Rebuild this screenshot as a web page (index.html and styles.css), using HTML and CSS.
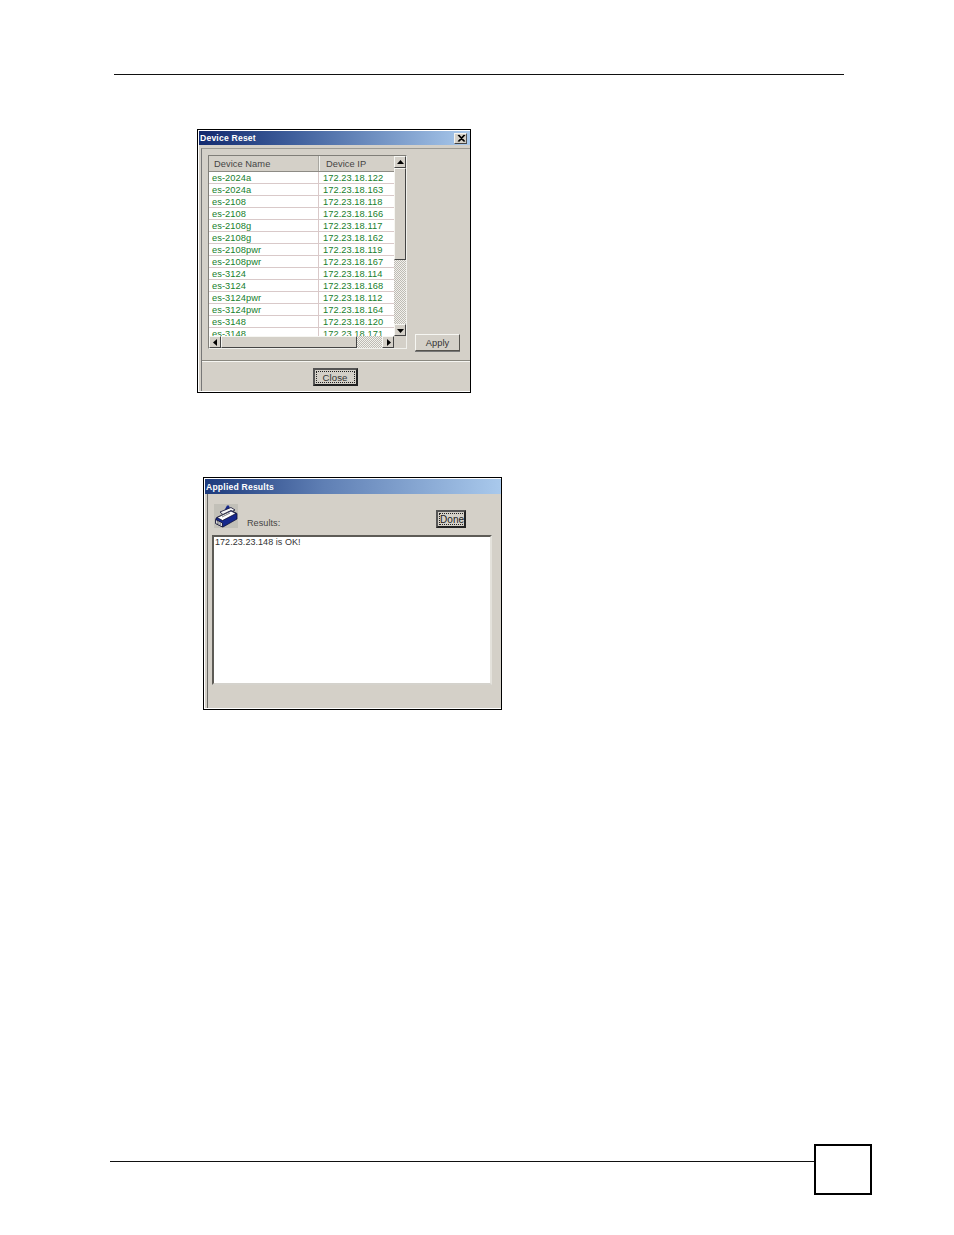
FILE: index.html
```html
<!DOCTYPE html>
<html lang="en">
<head>
<meta charset="utf-8">
<title>Device Reset</title>
<link rel="stylesheet" href="styles.css">
</head>
<body>
<div class="page">
  <div class="top-rule"></div>

  <section class="dialog reset-dialog">
    <div class="dialog-inner">
      <div class="title-bar">
        <span class="title">Device Reset</span>
        <span class="close-x"><svg width="12" height="11" viewBox="0 0 12 11"><path d="M3 2l6 6.5M4 2l6 6.5M9 2l-6 6.5M10 2l-6 6.5" stroke="#000" stroke-width="1.1" fill="none"/></svg></span>
      </div>
      <div class="reset-body">
        <div class="reset-main">
          <div class="list-panel">
            <div class="list-left">
              <div class="list-head">
                <div class="head-cell name-col">Device Name</div>
                <div class="head-cell ip-col">Device IP</div>
              </div>
              <div class="list-rows">
                <div class="row"><span class="name-col">es-2024a</span><span class="ip-col">172.23.18.122</span></div>
                <div class="row"><span class="name-col">es-2024a</span><span class="ip-col">172.23.18.163</span></div>
                <div class="row"><span class="name-col">es-2108</span><span class="ip-col">172.23.18.118</span></div>
                <div class="row"><span class="name-col">es-2108</span><span class="ip-col">172.23.18.166</span></div>
                <div class="row"><span class="name-col">es-2108g</span><span class="ip-col">172.23.18.117</span></div>
                <div class="row"><span class="name-col">es-2108g</span><span class="ip-col">172.23.18.162</span></div>
                <div class="row"><span class="name-col">es-2108pwr</span><span class="ip-col">172.23.18.119</span></div>
                <div class="row"><span class="name-col">es-2108pwr</span><span class="ip-col">172.23.18.167</span></div>
                <div class="row"><span class="name-col">es-3124</span><span class="ip-col">172.23.18.114</span></div>
                <div class="row"><span class="name-col">es-3124</span><span class="ip-col">172.23.18.168</span></div>
                <div class="row"><span class="name-col">es-3124pwr</span><span class="ip-col">172.23.18.112</span></div>
                <div class="row"><span class="name-col">es-3124pwr</span><span class="ip-col">172.23.18.164</span></div>
                <div class="row"><span class="name-col">es-3148</span><span class="ip-col">172.23.18.120</span></div>
                <div class="row"><span class="name-col">es-3148</span><span class="ip-col">172.23.18.171</span></div>
              </div>
              <div class="hscroll">
                <span class="sb-btn"><svg width="5" height="7" viewBox="0 0 5 7"><path d="M4 0v7L0 3.5z" fill="#000"/></svg></span>
                <span class="sb-thumb h-thumb"></span>
                <span class="sb-track"></span>
                <span class="sb-btn"><svg width="5" height="7" viewBox="0 0 5 7"><path d="M1 0v7l4-3.5z" fill="#000"/></svg></span>
              </div>
            </div>
            <div class="vscroll">
              <span class="sb-btn v-btn-up"><svg width="7" height="5" viewBox="0 0 7 5"><path d="M0 4h7L3.5 0z" fill="#000"/></svg></span>
              <span class="sb-thumb v-thumb"></span>
              <span class="sb-track"></span>
              <span class="sb-btn"><svg width="7" height="5" viewBox="0 0 7 5"><path d="M0 1h7L3.5 5z" fill="#000"/></svg></span>
            </div>
          </div>
          <button class="btn apply-btn" type="button">Apply</button>
        </div>
        <div class="reset-foot">
          <button class="btn focus-btn close-btn" type="button"><span class="focus-ring">Close</span></button>
        </div>
      </div>
    </div>
  </section>

  <section class="dialog results-dialog">
    <div class="dialog-inner">
      <div class="title-bar results-title"><span class="title">Applied Results</span></div>
      <div class="results-body">
        <div class="results-head">
          <span class="printer">
            <svg width="24" height="24" viewBox="0 0 24 24">
              <rect width="24" height="24" fill="#c2c0b8"/>
              <path d="M10 7 13 1.5 15 1.5 16 5z" fill="#16288c"/>
              <path d="M6 8 17 3.5 21 6 10 11.5z" fill="#f4f4f4" stroke="#0c0c30" stroke-width=".8"/>
              <path d="M2 14 17 6.5 23 9.5 23 15 9 23 2 19.5z" fill="#16288c" stroke="#06062c" stroke-width=".7"/>
              <path d="M3 13.5 8.5 16.5 22 9.5 17 7z" fill="#fff" stroke="#0c0c30" stroke-width=".8"/>
              <path d="M1.5 15.5 8.5 19 8.5 23 1.5 19.5z" fill="#d8d8dc" stroke="#0c0c30" stroke-width=".8"/>
              <path d="M3 17.5l4 2M3 19l4 2" stroke="#222" stroke-width=".7" stroke-dasharray="1 .6" fill="none"/>
              <path d="M8 13 16 9M6 12 14 8" stroke="#555" stroke-width=".7" fill="none"/>
            </svg>
          </span>
          <span class="results-label">Results:</span>
          <button class="btn focus-btn done-btn" type="button"><span class="focus-ring">Done</span></button>
        </div>
        <div class="results-area">172.23.23.148 is OK!</div>
      </div>
    </div>
  </section>

  <footer class="page-foot">
    <div class="foot-rule"></div>
    <div class="page-box"></div>
  </footer>
</div>
</body>
</html>
```

FILE: styles.css
```css
* { box-sizing: border-box; }

html, body {
  margin: 0;
  padding: 0;
  background: #fff;
}

.page {
  width: 954px;
  height: 1235px;
  padding-top: 74px;
  font-family: "Liberation Sans", Arial, sans-serif;
  font-size: 9.3px;
  letter-spacing: 0.05px;
  color: #3a3a3a;
  overflow: hidden;
}

.top-rule {
  height: 1px;
  margin-left: 114px;
  width: 730px;
  background: #111;
}

.dialog {
  border: 1px solid #000;
  background: #fff;
  padding: 1px 0 1px 1px;
}

.dialog-inner {
  height: 100%;
  background: #d4d0c8;
  border-left: 1px solid #d4d0c8;
  display: flex;
  flex-direction: column;
}

.reset-dialog {
  width: 274px;
  height: 264px;
  margin: 54px 0 0 197px;
}

.results-dialog {
  width: 299px;
  height: 233px;
  margin: 84px 0 0 203px;
}

.title-bar {
  flex: none;
  height: 14px;
  margin-left: -1px;
  padding: 0 3px 0 1px;
  display: flex;
  align-items: center;
  justify-content: space-between;
  background: linear-gradient(90deg, #12296e 0%, #3f5f9c 35%, #a9c9ec 100%);
}

.results-title {
  height: 15px;
  background: linear-gradient(90deg, #1d3a7c 0%, #5f7fb4 40%, #a9c9ec 100%);
}

.title {
  font-weight: 700;
  font-size: 8.6px;
  letter-spacing: 0.2px;
  color: #fff;
}

.close-x {
  width: 13px;
  height: 11px;
  display: flex;
  background: #d4d0c8;
  border: 1px solid;
  border-color: #f4f4f0 #555 #444 #f4f4f0;
  align-items: center;
  justify-content: center;
}

.close-x svg { flex: none; }

.reset-body {
  flex: 1;
  display: flex;
  flex-direction: column;
  margin: 3px 0 0 1px;
  border-left: 1px solid #777;
  border-top: 1px solid #9c9a94;
  min-height: 0;
}

.reset-main {
  height: 212px;
  padding: 6px 0 0 6px;
  display: flex;
  align-items: flex-start;
  border-bottom: 1px solid #8a8880;
  box-shadow: 0 1px 0 #f6f6f2;
}

.list-panel {
  width: 199px;
  height: 194px;
  display: flex;
  border: 1px solid;
  border-color: #807e78 #f0f0ec #f0f0ec #807e78;
}

.list-left {
  width: 185px;
  display: flex;
  flex-direction: column;
}

.list-head {
  height: 16px;
  flex: none;
  display: flex;
  background: #d4d0c8;
  border-bottom: 1px solid #8d8b85;
}

.head-cell {
  display: flex;
  align-items: center;
  color: #444;
}

.name-col {
  width: 110px;
  flex: none;
  padding-left: 3px;
}

.ip-col {
  flex: 1;
  padding-left: 4px;
}

.head-cell.name-col {
  padding-left: 5px;
  border-right: 1px solid #a8a6a0;
  box-shadow: 1px 0 0 #f4f4f0;
}

.head-cell.ip-col { padding-left: 7px; }

.list-rows {
  height: 164px;
  overflow: hidden;
  background: #fff;
}

.row {
  height: 12px;
  display: flex;
  align-items: center;
  border-bottom: 1px solid #d9c9c9;
  color: #17802c;
}

.row .name-col {
  height: 12px;
  padding-top: 1px;
  line-height: 11px;
  border-right: 1px solid #d9c9c9;
}

.row .ip-col {
  line-height: 11px;
  padding-top: 1px;
  padding-left: 4px;
}

.hscroll {
  flex: none;
  height: 12px;
  display: flex;
  margin-right: 0;
}

.vscroll {
  flex: 1;
  display: flex;
  flex-direction: column;
  height: 180px;
}

.sb-btn {
  flex: none;
  width: 12px;
  height: 12px;
  display: flex;
  align-items: center;
  justify-content: center;
  background: #d4d0c8;
  border: 1px solid;
  border-color: #f6f6f2 #444 #444 #f6f6f2;
}

.sb-btn svg { flex: none; }

.sb-thumb {
  flex: none;
  background: #d4d0c8;
  border: 1px solid;
  border-color: #f6f6f2 #444 #444 #f6f6f2;
}

.h-thumb { width: 136px; height: 12px; }
.v-thumb { height: 92px; width: 12px; }

.sb-track {
  flex: 1;
  background: repeating-conic-gradient(#f2f1ec 0 25%, #bdbbb4 0 50%) 0 0 / 2px 2px;
}

.btn {
  font: inherit;
  letter-spacing: inherit;
  color: #333;
  background: #d4d0c8;
  padding: 0;
  margin: 0;
  border: 1px solid;
  border-color: #f6f6f2 #55534e #55534e #f6f6f2;
}

.apply-btn {
  width: 45px;
  height: 17px;
  margin: 179px 0 0 8px;
  flex: none;
  box-shadow: 0 1px 0 #777;
}

.focus-btn {
  padding: 1px;
  border: 2px solid #222;
  border-top-color: #555;
  border-left-color: #555;
  display: flex;
}

.focus-ring {
  flex: 1;
  display: flex;
  align-items: center;
  justify-content: center;
  border: 1px dotted #222;
}

.reset-foot {
  flex: 1;
  display: flex;
  justify-content: center;
  padding: 7px 2px 0 0;
}

.close-btn {
  width: 45px;
  height: 18px;
  font-size: 9.6px;
}

.results-body {
  flex: 1;
  display: flex;
  flex-direction: column;
  margin: 0 0 0 1px;
  border-left: 1px solid #6a6a66;
  padding: 8px 9px 23px 4px;
  min-height: 0;
}

.results-head {
  flex: none;
  height: 33px;
  display: flex;
}

.printer {
  margin: 2px 9px 0 2px;
  display: flex;
  width: 24px;
  height: 24px;
  flex: none;
}

.results-label {
  margin: 16px 0 0 0;
  width: 189px;
  flex: none;
  color: #444;
  font-size: 9.1px;
}

.done-btn {
  width: 30px;
  height: 18px;
  margin-top: 8px;
  flex: none;
  font-size: 10px;
  color: #222;
}

.results-area {
  flex: 1;
  background: #fff;
  border: 2px solid;
  border-color: #5d5b56 #e4e2dc #d4d2cc #5d5b56;
  padding: 0 0 0 1px;
  color: #333;
  font-size: 9px;
  line-height: 11px;
}

.page-foot {
  display: flex;
  align-items: flex-start;
  margin: 434px 0 0 110px;
}

.foot-rule {
  width: 704px;
  height: 1px;
  margin-top: 17px;
  background: #111;
}

.page-box {
  width: 58px;
  height: 51px;
  border: 2px solid #000;
}
```
